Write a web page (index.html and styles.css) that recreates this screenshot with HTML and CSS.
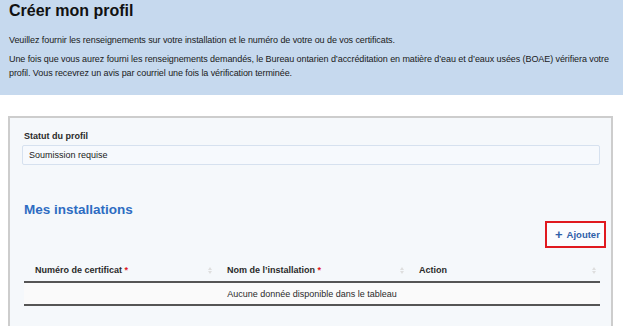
FILE: index.html
```html
<!DOCTYPE html>
<html lang="fr">
<head>
<meta charset="utf-8">
<title>Créer mon profil</title>
<link rel="stylesheet" href="styles.css">
</head>
<body>
<header class="banner">
  <h1 class="title">Créer mon profil</h1>
  <p class="intro">Veuillez fournir les renseignements sur votre installation et le numéro de votre ou de vos certificats.</p>
  <p class="intro">Une fois que vous aurez fourni les renseignements demandés, le Bureau ontarien d’accréditation en matière d’eau et d’eaux usées (BOAE) vérifiera votre profil. Vous recevrez un avis par courriel une fois la vérification terminée.</p>
</header>
<main class="panel">
  <label class="field-label">Statut du profil</label>
  <div class="field-input">Soumission requise</div>
  <h2 class="section-title">Mes installations</h2>
  <div class="actions">
    <button class="add-btn"><span class="plus">+</span> Ajouter</button>
  </div>
  <table class="grid">
    <thead>
      <tr>
        <th><div class="th-in"><span>Numéro de certificat <span class="req">*</span></span><span class="sort"></span></div></th>
        <th><div class="th-in"><span>Nom de l’installation <span class="req">*</span></span><span class="sort"></span></div></th>
        <th><div class="th-in"><span>Action</span><span class="sort"></span></div></th>
      </tr>
    </thead>
    <tbody>
      <tr><td colspan="3" class="empty">Aucune donnée disponible dans le tableau</td></tr>
    </tbody>
  </table>
</main>
</body>
</html>
```
FILE: styles.css
```css
html, body {
  margin: 0;
  padding: 0;
  background: #ffffff;
  font-family: "Liberation Sans", Arial, sans-serif;
  color: #1a1a1a;
  overflow: hidden;
}
.banner {
  background: #c6d9ee;
  padding: 1px 9px 15px 9px;
  height: 79px;
}
.title {
  margin: 0;
  font-size: 16px;
  line-height: 20px;
  font-weight: bold;
  color: #111;
}
.intro {
  margin: 12px 0 0 0;
  font-size: 9px;
  line-height: 14px;
  letter-spacing: -0.08px;
  color: #1a1a1a;
}
.intro + .intro {
  margin-top: 5px;
}
.panel {
  margin: 21px 10px 0 8px;
  background: #f5f8fb;
  border: 2px solid #cdcdcd;
  border-bottom: none;
  padding: 11px 11px 0 12px;
  height: 197px;
}
.field-label {
  display: block;
  padding-left: 2px;
  font-size: 9px;
  line-height: 14px;
  font-weight: bold;
  color: #2a2a2a;
}
.field-input {
  margin-top: 2px;
  height: 18px;
  border: 1px solid #d6e1ef;
  border-radius: 2px;
  background: #f6f9fd;
  padding: 0 6px;
  font-size: 9px;
  line-height: 18px;
  color: #1a1a1a;
}
.section-title {
  margin: 36px 0 0 2px;
  font-size: 13.5px;
  line-height: 18px;
  font-weight: bold;
  color: #2e6cc2;
}
.actions {
  display: flex;
  justify-content: flex-end;
  margin-top: 2px;
  margin-right: -6px;
}
.add-btn {
  display: flex;
  align-items: center;
  gap: 4px;
  width: 61px;
  height: 27px;
  border: 2px solid #e0191f;
  background: #fbfcfe;
  padding: 0 0 0 8px;
  font-family: "Liberation Sans", Arial, sans-serif;
  font-size: 9.5px;
  font-weight: bold;
  color: #2f5fa8;
}
.plus {
  font-size: 13px;
  line-height: 1;
}
.grid {
  width: 576px;
  margin: 11px 0 0 2px;
  border-collapse: collapse;
  table-layout: fixed;
}
.grid th {
  padding: 0;
  text-align: left;
  font-size: 9px;
  font-weight: bold;
  color: #2a2a2a;
  border-bottom: 2px solid #555;
}
.th-in {
  display: flex;
  justify-content: space-between;
  align-items: center;
  height: 22px;
  padding: 0 4px 0 11px;
}
.req {
  color: #e0191f;
}
.sort {
  width: 4px;
  height: 7px;
  position: relative;
}
.sort::before, .sort::after {
  content: "";
  position: absolute;
  left: 0;
  border-left: 2px solid transparent;
  border-right: 2px solid transparent;
}
.sort::before {
  top: 0;
  border-bottom: 3px solid #dedede;
}
.sort::after {
  bottom: 0;
  border-top: 3px solid #dedede;
}
.grid td.empty {
  height: 21px;
  padding: 0;
  text-align: center;
  font-size: 9px;
  color: #2a2a2a;
  background: #fafafa;
  border-bottom: 2px solid #555;
}
```
